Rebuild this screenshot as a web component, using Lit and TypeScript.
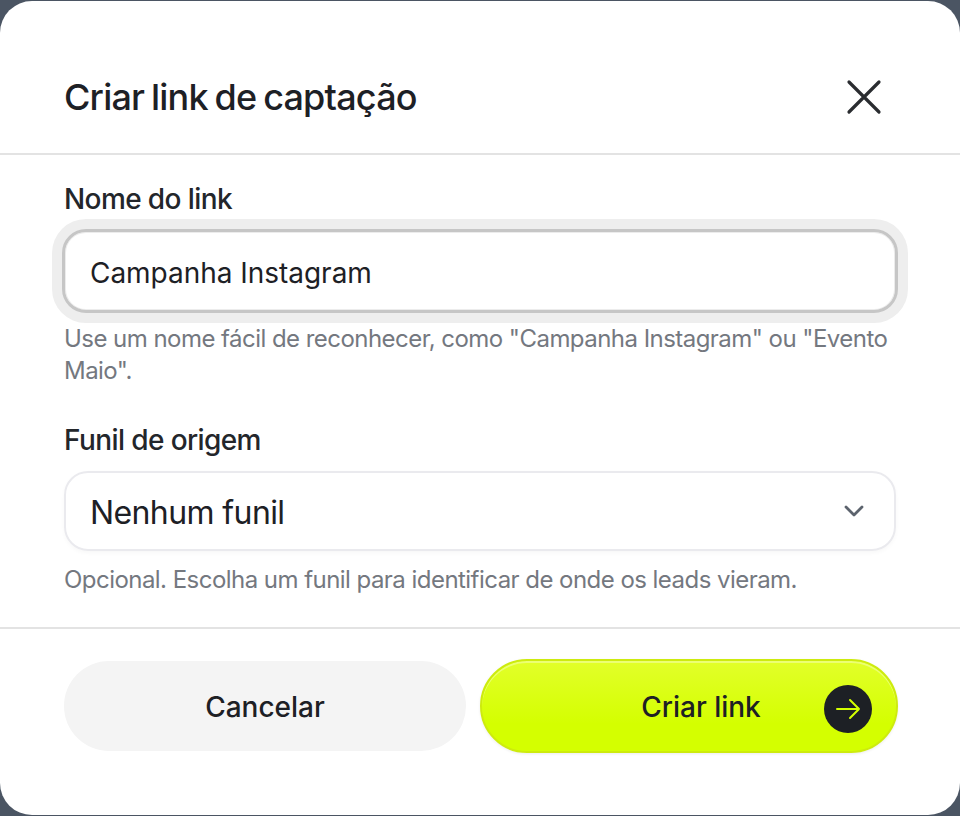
import { LitElement, html, css } from "lit";
import { customElement } from "lit/decorators.js";

@customElement("app-root")
export class AppRoot extends LitElement {
  static styles = css`
    :host {
      display: block;
      width: 960px;
      height: 816px;
      background: #4b5563;
      font-family: Inter, "Liberation Sans", sans-serif;
      color: #1d2025;
      overflow: hidden;
    }
    * { box-sizing: border-box; }
    .modal {
      margin-top: 1px;
      height: 814px;
      background: #fff;
      border-radius: 32px;
      display: flex;
      flex-direction: column;
    }
    .head {
      height: 154px;
      flex: none;
      padding: 40px 64px 0;
      display: flex;
      align-items: center;
      justify-content: space-between;
      border-bottom: 2px solid #e3e3e3;
    }
    h1 {
      margin: 0;
      font-size: 36px;
      font-weight: 500;
      letter-spacing: -0.8px;
      word-spacing: -2px;
      line-height: 44px;
      color: #1d2025;
    }
    .close { width: 48px; height: 48px; display: block; margin-right: 8px; flex: none; }
    .body {
      height: 474px;
      flex: none;
      padding: 26px 64px 0;
      border-bottom: 2px solid #e3e3e3;
      display: flex;
      flex-direction: column;
    }
    label {
      font-size: 28px;
      font-weight: 500;
      line-height: 36px;
      letter-spacing: -0.6px;
      display: block;
      color: #23262b;
    }
    .input {
      display: block;
      margin: 12px -2px 0;
      width: 836px;
      height: 84px;
      border: 3px solid #c6c6c6;
      border-radius: 24px;
      box-shadow: 0 0 0 10px #eeeeee, inset 0 0 0 1px #ececec;
      padding: 4px 25px 0;
      font: 400 28px Inter, "Liberation Sans", sans-serif;
      letter-spacing: -0.03px;
      color: #1d2025;
      background: #fff;
      outline: none;
    }
    .hint {
      margin: 10px 0 0;
      font-size: 24px;
      line-height: 32px;
      color: #74787f;
      letter-spacing: -0.54px;
    }
    .second { margin-top: 35px; }
    .select {
      margin-top: 13px;
      height: 80px;
      border: 2px solid #eaeaee;
      border-radius: 24px;
      padding: 2px 24px 0;
      display: flex;
      align-items: center;
      justify-content: space-between;
      font-size: 32px;
      font-weight: 400;
      letter-spacing: -0.6px;
      box-shadow: 0 2px 4px rgba(0, 0, 0, 0.03);
    }
    .select + .hint { margin-top: 13px; }
    .chev { width: 24px; height: 16px; display: block; margin-right: 4px; }
    .foot {
      flex: 1;
      padding: 32px 62px 0 64px;
      display: flex;
      gap: 14px;
      align-items: flex-start;
    }
    .btn {
      height: 90px;
      border-radius: 45px;
      border: none;
      display: flex;
      align-items: center;
      justify-content: center;
      padding-top: 2px;
      font: 500 28px Inter, "Liberation Sans", sans-serif;
      color: #1d2025;
    }
    .cancel { width: 402px; background: #f4f4f4; }
    .primary {
      width: 418px;
      height: 94px;
      border-radius: 47px;
      margin-top: -2px;
      background: linear-gradient(180deg, #e2ff2a 0%, #d4ff00 70%);
      border: 2px solid #cdeb0e;
      box-shadow: inset 0 2px 0 rgba(255, 255, 255, 0.35), 0 1px 3px rgba(0,0,0,.08);
      position: relative;
      padding-left: 24px;
    }
    .go {
      position: absolute;
      right: 24px;
      top: 24px;
      width: 48px;
      height: 48px;
      border-radius: 50%;
      background: #1d2025;
      display: flex;
      align-items: center;
      justify-content: center;
    }
    .go svg { width: 28px; height: 28px; display: block; }
  `;

  render() {
    return html`
      <div class="modal">
        <div class="head">
          <h1>Criar link de captação</h1>
          <svg class="close" viewBox="0 0 48 48" fill="none" stroke="#2a2c30" stroke-width="3.2" stroke-linecap="round">
            <path d="M9 9 L39 39 M39 9 L9 39"></path>
          </svg>
        </div>
        <div class="body">
          <label>Nome do link</label>
          <input class="input" .value=${"Campanha Instagram"} />
          <p class="hint">Use um nome fácil de reconhecer, como "Campanha Instagram" ou "Evento Maio".</p>
          <label class="second">Funil de origem</label>
          <div class="select">
            <span>Nenhum funil</span>
            <svg class="chev" viewBox="0 0 24 16" fill="none" stroke="#5c636d" stroke-width="2.8" stroke-linecap="round" stroke-linejoin="round">
              <path d="M4 3 L12 11 L20 3"></path>
            </svg>
          </div>
          <p class="hint">Opcional. Escolha um funil para identificar de onde os leads vieram.</p>
        </div>
        <div class="foot">
          <div class="btn cancel">Cancelar</div>
          <div class="btn primary">
            Criar link
            <span class="go">
              <svg viewBox="0 0 28 28" fill="none" stroke="#d4ff00" stroke-width="2" stroke-linecap="round" stroke-linejoin="round">
                <path d="M3 14 H25 M16 5 L25 14 L16 23"></path>
              </svg>
            </span>
          </div>
        </div>
      </div>
    `;
  }
}
